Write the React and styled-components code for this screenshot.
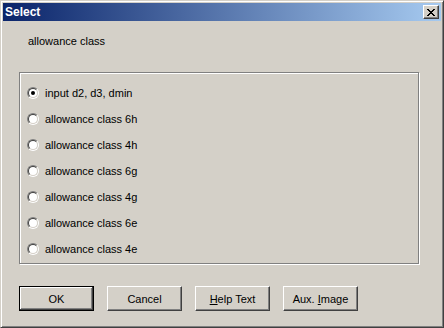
import React from "react";
import styled, { createGlobalStyle } from "styled-components";

const Global = createGlobalStyle`
  html, body { margin: 0; padding: 0; background: #d4d0c8; }
  body { font-family: "Liberation Sans", Arial, sans-serif; font-size: 11px; }
`;

const Window = styled.div`
  width: 444px;
  height: 328px;
  box-sizing: border-box;
  background: #d4d0c8;
  border: 1px solid;
  border-color: #d4d0c8 #404040 #404040 #d4d0c8;
  box-shadow: inset 1px 1px 0 #fff, inset -1px -1px 0 #808080;
  padding: 2px;
  display: flex;
  flex-direction: column;
`;

const TitleBar = styled.div`
  height: 18px;
  flex: none;
  display: flex;
  align-items: center;
  justify-content: space-between;
  padding: 0 2px;
  background: linear-gradient(to right, #0a246a, #a6caf0);
`;

const Title = styled.span`
  color: #fff;
  font: bold 12px "Liberation Sans", Arial, sans-serif;
  line-height: 18px;
`;

const CloseButton = styled.button`
  width: 16px;
  height: 14px;
  box-sizing: border-box;
  padding: 1px 0 0 0;
  margin: 0;
  background: #d4d0c8;
  border: 1px solid;
  border-color: #fff #404040 #404040 #fff;
  box-shadow: inset -1px -1px 0 #808080;
  display: flex;
  align-items: center;
  justify-content: center;
`;

const Content = styled.div`
  flex: 1;
  display: flex;
  flex-direction: column;
  padding: 0 22px 0 16px;
`;

const Label = styled.div`
  margin: 14px 0 0 9px;
  line-height: 13px;
  color: #000;
`;

const Group = styled.div`
  margin-top: 24px;
  height: 192px;
  box-sizing: border-box;
  border: 1px solid #808080;
  box-shadow: 1px 1px 0 #fff, inset 1px 1px 0 #fff;
  padding: 7px 0 0 7px;
  display: flex;
  flex-direction: column;
`;

const RadioRow = styled.label`
  height: 26px;
  display: flex;
  align-items: center;
  gap: 6px;
  color: #000;
  line-height: 13px;
`;

const RadioOuter = styled.span`
  width: 12px;
  height: 12px;
  box-sizing: border-box;
  border-radius: 50%;
  border: 1px solid;
  border-color: #808080 #fff #fff #808080;
  display: flex;
  align-items: center;
  justify-content: center;
  flex: none;
`;

const RadioInner = styled.span`
  width: 10px;
  height: 10px;
  box-sizing: border-box;
  border-radius: 50%;
  border: 1px solid;
  border-color: #404040 #d4d0c8 #d4d0c8 #404040;
  background: #fff;
  display: flex;
  align-items: center;
  justify-content: center;
`;

const Dot = styled.span`
  width: 4px;
  height: 4px;
  border-radius: 50%;
  background: #000;
`;

const ButtonRow = styled.div`
  margin-top: 22px;
  display: flex;
  gap: 13px;
`;

const Button = styled.button`
  width: 75px;
  height: 25px;
  box-sizing: border-box;
  padding: 0;
  margin: 0;
  background: #d4d0c8;
  color: #000;
  font: 11px "Liberation Sans", Arial, sans-serif;
  border: 1px solid;
  border-color: ${(p) => (p.$default ? "#000" : "#fff #404040 #404040 #fff")};
  box-shadow: ${(p) =>
    p.$default
      ? "inset -1px -1px 0 #404040, inset 1px 1px 0 #fff, inset -2px -2px 0 #808080"
      : "inset -1px -1px 0 #808080"};
`;

const Mnemonic = styled.span`
  text-decoration: underline;
`;

const CloseGlyph = () => (
  <svg width="8" height="7" viewBox="0 0 8 7" shapeRendering="crispEdges">
    <path
      fill="#000"
      d="M0 0h2v1H0zM6 0h2v1H6zM1 1h2v1H1zM5 1h2v1H5zM2 2h4v1H2zM3 3h2v1H3zM2 4h4v1H2zM1 5h2v1H1zM5 5h2v1H5zM0 6h2v1H0zM6 6h2v1H6z"
    />
  </svg>
);

const Radio = ({ checked, children }) => (
  <RadioRow>
    <RadioOuter>
      <RadioInner>{checked && <Dot />}</RadioInner>
    </RadioOuter>
    {children}
  </RadioRow>
);

const options = [
  "input d2, d3, dmin",
  "allowance class 6h",
  "allowance class 4h",
  "allowance class 6g",
  "allowance class 4g",
  "allowance class 6e",
  "allowance class 4e",
];

export default function App() {
  return (
    <>
      <Global />
      <Window>
        <TitleBar>
          <Title>Select</Title>
          <CloseButton aria-label="Close">
            <CloseGlyph />
          </CloseButton>
        </TitleBar>
        <Content>
          <Label>allowance class</Label>
          <Group>
            {options.map((o, i) => (
              <Radio key={o} checked={i === 0}>
                {o}
              </Radio>
            ))}
          </Group>
          <ButtonRow>
            <Button $default>OK</Button>
            <Button>Cancel</Button>
            <Button>
              <Mnemonic>H</Mnemonic>elp Text
            </Button>
            <Button>
              Aux. <Mnemonic>I</Mnemonic>mage
            </Button>
          </ButtonRow>
        </Content>
      </Window>
    </>
  );
}
